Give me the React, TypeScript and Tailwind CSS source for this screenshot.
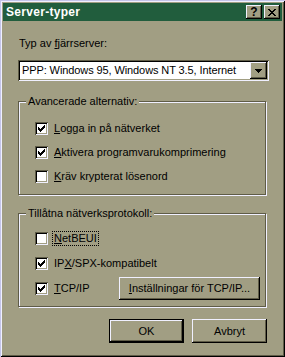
import React from "react";

const Check = () => (
  <svg width="7" height="7" viewBox="0 0 7 7" shapeRendering="crispEdges">
    <path d="M6 0h1v3h-1v1h-1v1h-1v1h-1v1h-1v-1h-1v-1h-1v-3h1v1h1v1h1v-1h1v-1h1z" fill="#000" />
  </svg>
);

const CheckBox = ({ checked }: { checked: boolean }) => (
  <div className="w-[13px] h-[13px] shrink-0 bg-white flex items-center justify-center shadow-[inset_1px_1px_0_#5f5c47,inset_-1px_-1px_0_#f0f0ff,inset_2px_2px_0_#000,inset_-2px_-2px_0_#a19e83]">
    {checked && <Check />}
  </div>
);

const Option = ({
  checked,
  children,
  focus,
}: {
  checked: boolean;
  children: React.ReactNode;
  focus?: boolean;
}) => (
  <div className="flex items-center gap-[5px]">
    <CheckBox checked={checked} />
    <span
      className={
        focus
          ? "outline outline-1 outline-dotted outline-black px-[1px] leading-[13px]"
          : "px-[1px] leading-[13px]"
      }
    >
      {children}
    </span>
  </div>
);

const GroupBox = ({
  title,
  children,
}: {
  title: string;
  children: React.ReactNode;
}) => (
  <div className="relative w-[248px] h-[94px] border border-[#5f5c47] shadow-[inset_1px_1px_0_#f0f0ff,1px_1px_0_#f0f0ff]">
    <span className="absolute left-[7px] top-[-7px] px-[2px] bg-[#a19e83] leading-[13px]">
      {title}
    </span>
    {children}
  </div>
);

const raised =
  "shadow-[inset_-1px_-1px_0_#000,inset_1px_1px_0_#f0f0ff,inset_-2px_-2px_0_#5f5c47]";

export default function App() {
  return (
    <div className="w-[285px] h-[357px] bg-[#a19e83] p-[3px] flex flex-col font-['Liberation_Sans',Arial,sans-serif] text-[11px] text-black shadow-[inset_1px_1px_0_#c4c4ea,inset_-1px_-1px_0_#000,inset_2px_2px_0_#f0f0ff,inset_-2px_-2px_0_#5f5c47]">
      {/* title bar */}
      <div className="h-[18px] bg-[#215d3d] flex items-center pl-[3px] pr-[2px]">
        <span className="text-white font-bold text-[12px] tracking-[0.3px]">
          Server-typer
        </span>
        <div className="ml-auto flex gap-[2px]">
          <div className={`w-[16px] h-[14px] bg-[#a19e83] flex items-center justify-center font-bold text-[12px] leading-none ${raised}`}>
            ?
          </div>
          <div className={`w-[16px] h-[14px] bg-[#a19e83] flex items-center justify-center ${raised}`}>
            <svg width="8" height="7" viewBox="0 0 8 7" shapeRendering="crispEdges">
              <path d="M0 0h2l2 2.5l2-2.5h2l-3 3.5l3 3.5h-2l-2-2.5l-2 2.5h-2l3-3.5z" fill="#000" />
            </svg>
          </div>
        </div>
      </div>

      {/* body */}
      <div className="flex flex-col pl-[15px]">
        <div className="mt-[16px] leading-[13px] pl-[1px]">
          Typ av <span className="underline">f</span>järrserver:
        </div>

        <div className="mt-[10px] w-[251px] h-[21px] bg-white flex items-center shadow-[inset_1px_1px_0_#5f5c47,inset_-1px_-1px_0_#f0f0ff,inset_2px_2px_0_#000,inset_-2px_-2px_0_#a19e83]">
          <span className="pl-[4px] text-[11px] whitespace-nowrap tracking-[-0.1px]">
            PPP: Windows 95, Windows NT 3.5, Internet
          </span>
          <div className={`ml-auto mr-[2px] shrink-0 w-[17px] h-[17px] bg-[#a19e83] flex items-center justify-center ${raised}`}>
            <svg width="7" height="4" viewBox="0 0 7 4" shapeRendering="crispEdges">
              <path d="M0 0h7v1h-1v1h-1v1h-1v1h-1v-1h-1v-1h-1v-1h-1z" fill="#000" />
            </svg>
          </div>
        </div>

        <div className="mt-[20px]">
          <GroupBox title="Avancerade alternativ:">
            <div className="flex flex-col gap-[11px] pl-[16px] pt-[20px]">
              <Option checked>
                <span className="underline">L</span>ogga in på nätverket
              </Option>
              <Option checked>
                <span className="underline">A</span>ktivera programvarukomprimering
              </Option>
              <Option checked={false}>
                <span className="underline">K</span>räv krypterat lösenord
              </Option>
            </div>
          </GroupBox>
        </div>

        <div className="mt-[18px]">
          <GroupBox title="Tillåtna nätverksprotokoll:">
            <div className="flex flex-col gap-[12px] pl-[16px] pt-[18px]">
              <Option checked={false} focus>
                <span className="underline">N</span>etBEUI
              </Option>
              <Option checked>
                IP<span className="underline">X</span>/SPX-kompatibelt
              </Option>
              <div className="flex items-center h-[13px]">
                <Option checked>
                  <span className="underline">T</span>CP/IP
                </Option>
                <div className={`ml-auto mr-[5px] w-[141px] h-[23px] bg-[#a19e83] flex items-center justify-center ${raised}`}>
                  <span className="underline">I</span>nställningar för TCP/IP...
                </div>
              </div>
            </div>
          </GroupBox>
        </div>

        <div className="mt-[12px] w-[249px] flex justify-end gap-[8px]">
          <div className="w-[75px] h-[24px] bg-[#a19e83] border border-black flex items-center justify-center shadow-[inset_-1px_-1px_0_#000,inset_1px_1px_0_#f0f0ff,inset_-2px_-2px_0_#5f5c47]">
            OK
          </div>
          <div className={`w-[75px] h-[24px] bg-[#a19e83] flex items-center justify-center ${raised}`}>
            Avbryt
          </div>
        </div>
      </div>
    </div>
  );
}
